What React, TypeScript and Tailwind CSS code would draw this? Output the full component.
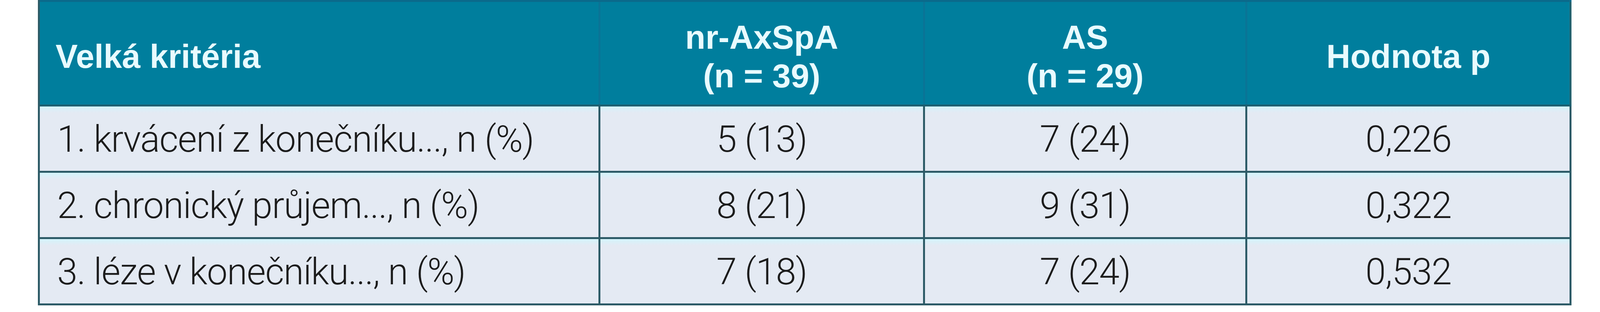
const rows = [
  { label: '1. krvácení z konečníku..., n (%)', a: '5 (13)', b: '7 (24)', p: '0,226' },
  { label: '2. chronický průjem..., n (%)', a: '8 (21)', b: '9 (31)', p: '0,322' },
  { label: '3. léze v konečníku..., n (%)', a: '7 (18)', b: '7 (24)', p: '0,532' },
]

const head = "font-['Liberation_Sans',Arial,sans-serif] text-[85px] font-bold leading-[99px] text-[#e8fbff]"
const body = "font-['Roboto','Liberation_Sans',sans-serif] text-[94px] font-light tracking-[-1.3px] text-[#1c1c1c]"
const cell =
  'flex h-[170px] min-w-0 items-center whitespace-nowrap border-r-[5px] border-b-[5px] border-[#2d5b67] bg-[linear-gradient(to_bottom,#d3f4fb_0px,#e4eaf3_16px)] pt-[4px]'

export default function App() {
  return (
    <div className="h-[800px] w-full overflow-hidden bg-white">
      <div className="ml-[2.373%] flex w-[95.85%] flex-col border-l-[5px] border-[#2d5b67]">
        {/* header */}
        <div className="flex h-[273px] border-t-[5px] border-b-[5px] border-t-[#0b6a8b] border-b-[#1d5f70] bg-[#007e9d]">
          <div className={`flex w-[36.6%] items-center whitespace-nowrap border-r-[5px] border-[#0a7496] pl-[40px] pt-[16px] ${head}`}>
            Velká kritéria
          </div>
          <div className={`flex w-[21.18%] flex-col items-center justify-center border-r-[5px] border-[#0a7496] pt-[16px] text-center ${head}`}>
            <span>nr-AxSpA</span>
            <span>(n = 39)</span>
          </div>
          <div className={`flex w-[21.05%] flex-col items-center justify-center border-r-[5px] border-[#0a7496] pt-[16px] text-center ${head}`}>
            <span>AS</span>
            <span>(n = 29)</span>
          </div>
          <div className={`flex flex-1 items-center justify-center whitespace-nowrap border-r-[5px] border-[#23626f] pt-[16px] ${head}`}>
            Hodnota p
          </div>
        </div>

        {rows.map((r) => (
          <div key={r.label} className={`flex ${body}`}>
            <div className={`${cell} w-[36.6%] pl-[44px]`}>{r.label}</div>
            <div className={`${cell} w-[21.18%] justify-center`}>{r.a}</div>
            <div className={`${cell} w-[21.05%] justify-center`}>{r.b}</div>
            <div className={`${cell} flex-1 justify-center`}>{r.p}</div>
          </div>
        ))}
      </div>
    </div>
  )
}
